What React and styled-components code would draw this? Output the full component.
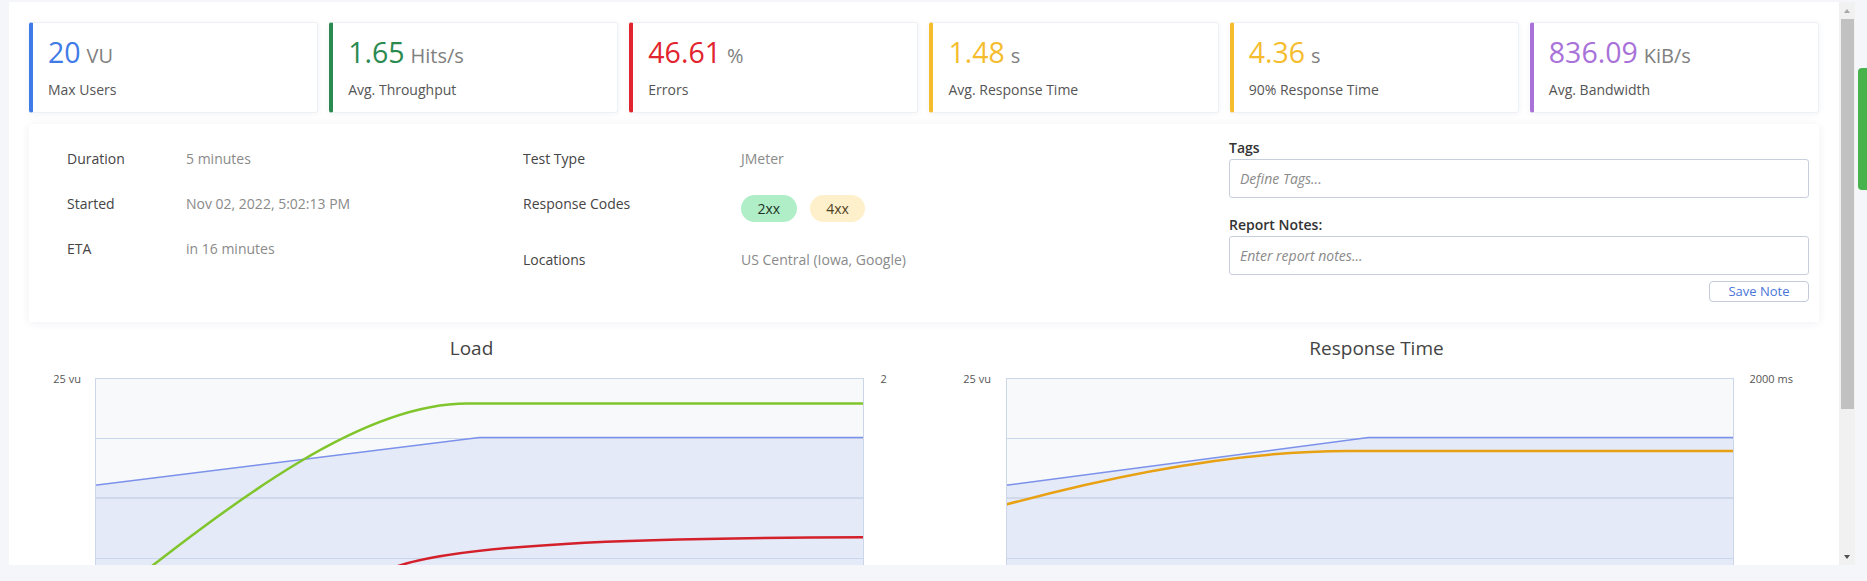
import React from 'react';
import styled, { createGlobalStyle } from 'styled-components';

const GlobalStyle = createGlobalStyle`
  html, body {
    margin: 0;
    padding: 0;
    background: #f4f6fa;
  }
  body {
    font-family: "Open Sans", "Liberation Sans", sans-serif;
    color: #444;
  }
  * {
    box-sizing: border-box;
  }
`;

const Page = styled.div`
  height: 100vh;
  display: flex;
  padding: 2px 12px 16px 9px;
`;

const Content = styled.main`
  flex: 1;
  min-width: 0;
  overflow: hidden;
  background: #fff;
  padding: 20px 20px 0;
`;

const ScrollRail = styled.div`
  flex: none;
  width: 16px;
  background: #f1f1f1;
  display: flex;
  flex-direction: column;
`;

const ScrollArrow = styled.div`
  height: 17px;
  display: flex;
  align-items: center;
  justify-content: center;
  margin-top: ${p => (p.$down ? 'auto' : '0')};

  &::before {
    content: '';
    border-left: 3.5px solid transparent;
    border-right: 3.5px solid transparent;
    ${p => (p.$down ? 'border-top: 4px solid #505050;' : 'border-bottom: 4px solid #a8a8a8;')}
  }
`;

const ScrollThumb = styled.div`
  height: 390px;
  margin: 0 1px 0 2px;
  background: #c1c1c1;
`;

const FeedbackTab = styled.div`
  position: fixed;
  right: 0;
  top: 68px;
  width: 9px;
  height: 122px;
  background: #48b24c;
  border-radius: 4px 0 0 4px;
`;

/* ---- stat cards ---- */

const StatRow = styled.div`
  display: grid;
  grid-template-columns: repeat(6, 1fr);
  gap: 11px;
`;

const StatCard = styled.div`
  background: #fff;
  border: 1px solid #edf0f5;
  border-left: 4px solid ${p => p.$color};
  border-radius: 3px;
  box-shadow: 0 1px 6px rgba(30, 45, 80, 0.06);
  padding: 11px 16px 12px 15px;
`;

const StatValue = styled.div`
  font-size: 28.5px;
  line-height: 36px;
  color: ${p => p.$color};
  white-space: nowrap;
`;

const StatUnit = styled.span`
  font-size: 20px;
  line-height: 1;
  color: #808080;
  margin-left: 6px;
`;

const StatLabel = styled.div`
  margin-top: 9px;
  font-size: 14px;
  line-height: 21px;
  color: #555;
`;

/* ---- details ---- */

const DetailsCard = styled.section`
  margin-top: 11px;
  background: #fff;
  border-radius: 3px;
  box-shadow: 0 1px 10px rgba(30, 45, 80, 0.07);
  display: grid;
  grid-template-columns: 456px 706px 1fr;
  padding: 0 10px 0 38px;
`;

const InfoList = styled.dl`
  margin: 0;
  padding-top: 24px;
  display: grid;
  grid-template-columns: ${p => p.$labelWidth}px 1fr;
  row-gap: 24px;
  align-items: start;
  align-content: start;
  font-size: 14px;
  line-height: 21px;
`;

const InfoTerm = styled.dt`
  color: #444;
`;

const InfoValue = styled.dd`
  margin: 0;
  color: #8a8a8a;
`;

const Badges = styled.dd`
  margin: 2px 0 3px;
  display: flex;
  gap: 13px;
`;

const Badge = styled.span`
  height: 27px;
  padding: 0 16.5px;
  border-radius: 14px;
  font-size: 14px;
  line-height: 27px;
  background: ${p => p.$bg};
  color: ${p => p.$fg};
`;

const NotesColumn = styled.div`
  display: flex;
  flex-direction: column;
  padding: 13px 0 20px;
`;

const FieldLabel = styled.label`
  font-size: 14px;
  line-height: 21px;
  font-weight: 600;
  color: #333;
  margin-bottom: 1px;
  margin-top: ${p => (p.$spaced ? '16px' : '0')};
`;

const TextField = styled.input`
  height: 39px;
  width: 100%;
  border: 1px solid #c8cfdc;
  border-radius: 3px;
  padding: 0 10px;
  font-family: inherit;
  font-size: 14px;
  color: #444;
  background: #fff;
  outline: none;

  &::placeholder {
    color: #8a8a8a;
    font-style: italic;
  }
`;

const SaveButton = styled.button`
  align-self: flex-end;
  margin-top: 6px;
  width: 100px;
  height: 21px;
  padding: 0;
  border: 1px solid #c3cbda;
  border-radius: 4px;
  background: #fff;
  font-family: inherit;
  font-size: 13px;
  line-height: 19px;
  color: #4a76d8;
`;

/* ---- charts ---- */

const ChartsRow = styled.div`
  display: grid;
  grid-template-columns: 1fr 1fr;
  gap: 20px;
  margin-top: 13px;
`;

const ChartBlock = styled.div`
  display: flex;
  flex-direction: column;
`;

const ChartTitle = styled.h3`
  margin: 0;
  text-align: center;
  font-weight: 400;
  font-size: 19px;
  line-height: 27px;
  color: #444;
`;

const ChartBody = styled.div`
  display: flex;
  margin-top: 16px;
`;

const AxisLabel = styled.div`
  flex: none;
  width: ${p => p.$width}px;
  margin-top: -5px;
  font-size: 11px;
  line-height: 11px;
  color: #555;
  white-space: nowrap;
  text-align: ${p => (p.$side === 'left' ? 'right' : 'left')};
  padding-right: ${p => (p.$side === 'left' ? `${p.$inset}px` : '0')};
  padding-left: ${p => (p.$side === 'right' ? `${p.$inset}px` : '0')};
`;

const Plot = styled.svg`
  flex: 1;
  min-width: 0;
  height: 300px;
  display: block;
`;

function Chart({ width, users, series, leftAxis, rightAxis, rightLabel }) {
  const [ux, uy, ey] = users;
  return (
    <ChartBody>
      <AxisLabel $side="left" $width={leftAxis[0]} $inset={leftAxis[1]}>25 vu</AxisLabel>
      <Plot viewBox={`0 0 ${width} 300`} preserveAspectRatio="none">
        <rect x="0" y="0" width={width} height="300" fill="#f7f9fb" />
        <path d={`M0,${uy} L${ux},${ey} L${width},${ey} L${width},300 L0,300 Z`} fill="#e4eaf8" />
        <line x1="0" x2={width} y1="60.5" y2="60.5" stroke="#c9d7ec" strokeWidth="1" />
        <line x1="0" x2={width} y1="120" y2="120" stroke="#cfd9e9" strokeWidth="2" />
        <line x1="0" x2={width} y1="180.5" y2="180.5" stroke="#c9d7ec" strokeWidth="1" />
        <line x1="0" x2={width} y1="240.5" y2="240.5" stroke="#c9d7ec" strokeWidth="1" />
        <path d={`M0,${uy} L${ux},${ey} L${width},${ey}`} fill="none" stroke="#7b91ea" strokeWidth="1.5" />
        {series.map(s => (
          <path key={s.color} d={s.d} fill="none" stroke={s.color} strokeWidth="2.5" />
        ))}
        <rect x="0.5" y="0.5" width={width - 1} height="299" fill="none" stroke="#cbd7e9" strokeWidth="1" />
      </Plot>
      <AxisLabel $side="right" $width={rightAxis[0]} $inset={rightAxis[1]}>{rightLabel}</AxisLabel>
    </ChartBody>
  );
}

const stats = [
  { value: '20', unit: 'VU', label: 'Max Users', color: '#3f7be6' },
  { value: '1.65', unit: 'Hits/s', label: 'Avg. Throughput', color: '#2b8a50' },
  { value: '46.61', unit: '%', label: 'Errors', color: '#e1242d' },
  { value: '1.48', unit: 's', label: 'Avg. Response Time', color: '#f5bd2e' },
  { value: '4.36', unit: 's', label: '90% Response Time', color: '#f5bd2e' },
  { value: '836.09', unit: 'KiB/s', label: 'Avg. Bandwidth', color: '#a872d9' },
];

export default function App() {
  return (
    <>
      <GlobalStyle />
      <Page>
        <Content>
          <StatRow>
            {stats.map(s => (
              <StatCard key={s.label} $color={s.color}>
                <StatValue $color={s.color}>
                  {s.value}
                  <StatUnit>{s.unit}</StatUnit>
                </StatValue>
                <StatLabel>{s.label}</StatLabel>
              </StatCard>
            ))}
          </StatRow>

          <DetailsCard>
            <InfoList $labelWidth={119}>
              <InfoTerm>Duration</InfoTerm>
              <InfoValue>5 minutes</InfoValue>
              <InfoTerm>Started</InfoTerm>
              <InfoValue>Nov 02, 2022, 5:02:13 PM</InfoValue>
              <InfoTerm>ETA</InfoTerm>
              <InfoValue>in 16 minutes</InfoValue>
            </InfoList>
            <InfoList $labelWidth={218}>
              <InfoTerm>Test Type</InfoTerm>
              <InfoValue>JMeter</InfoValue>
              <InfoTerm>Response Codes</InfoTerm>
              <Badges>
                <Badge $bg="#b0eec8" $fg="#1f3327">2xx</Badge>
                <Badge $bg="#fdf0ca" $fg="#4d4123">4xx</Badge>
              </Badges>
              <InfoTerm>Locations</InfoTerm>
              <InfoValue>US Central (Iowa, Google)</InfoValue>
            </InfoList>
            <NotesColumn>
              <FieldLabel htmlFor="tags">Tags</FieldLabel>
              <TextField id="tags" placeholder="Define Tags..." />
              <FieldLabel htmlFor="notes" $spaced>Report Notes:</FieldLabel>
              <TextField id="notes" placeholder="Enter report notes..." />
              <SaveButton>Save Note</SaveButton>
            </NotesColumn>
          </DetailsCard>

          <ChartsRow>
            <ChartBlock>
              <ChartTitle>Load</ChartTitle>
              <Chart
                width={769}
                users={[384.3, 107.3, 59.6]}
                leftAxis={[66, 14]}
                rightAxis={[50, 16.5]}
                rightLabel="2"
                series={[
                  { color: '#7fc52b', d: 'M0,233 C150,113 270,25.6 372,25.6 L769,25.6' },
                  { color: '#d4202a', d: 'M226,223 L290,193 C350,165 550,160 769,159.3' },
                ]}
              />
            </ChartBlock>
            <ChartBlock>
              <ChartTitle>Response Time</ChartTitle>
              <Chart
                width={728}
                users={[362.5, 107.3, 59.6]}
                leftAxis={[72, 15]}
                rightAxis={[85, 15.5]}
                rightLabel="2000 ms"
                series={[
                  { color: '#e8a112', d: 'M0,126.6 C110,97 230,73 342,73 L728,73' },
                ]}
              />
            </ChartBlock>
          </ChartsRow>
        </Content>
        <ScrollRail>
          <ScrollArrow />
          <ScrollThumb />
          <ScrollArrow $down />
        </ScrollRail>
      </Page>
      <FeedbackTab />
    </>
  );
}
